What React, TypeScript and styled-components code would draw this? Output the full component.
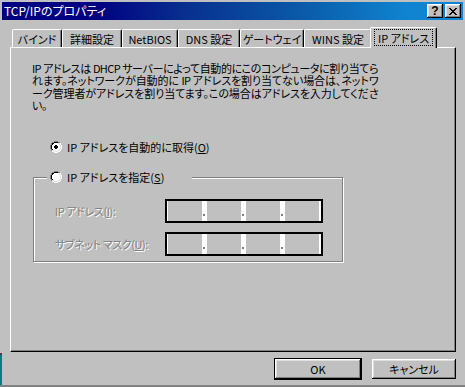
import React from "react";
import styled, { createGlobalStyle } from "styled-components";

const FONT = `"Noto Sans CJK JP", "Noto Sans", sans-serif`;

const GlobalStyle = createGlobalStyle`
  html, body { margin: 0; padding: 0; background: #c0c0c0; }
  body {
    font-family: ${FONT};
    font-size: 11px;
    color: #000;
    font-feature-settings: "palt";
  }
`;

const Screen = styled.div`
  width: 465px;
  height: 387px;
  display: flex;
  flex-direction: column;
  background: #c0c0c0;
  overflow: hidden;
`;

const Main = styled.div`
  display: flex;
  flex: 1;
  min-height: 0;
`;

const BottomEdge = styled.div`
  height: 2px;
  background: #808080;
`;

const LeftStrip = styled.div`
  width: 2px;
  display: flex;
  flex-direction: column;
`;
const StripGrey = styled.div`
  flex: 1;
  background: #c0c0c0;
`;
const StripLine = styled.div`
  height: 2px;
  background: #404040;
`;
const StripDesk = styled.div`
  height: 30px;
  background: #008080;
`;

const Window = styled.div`
  flex: 1;
  display: flex;
  flex-direction: column;
  padding: 2px 2px 0 0;
  min-width: 0;
`;

const TitleBar = styled.div`
  height: 18px;
  display: flex;
  align-items: center;
  padding: 0 2px 0 2px;
  background: linear-gradient(90deg, #000080 0%, #000080 20%, #08308f 40%, #0a5aa8 65%, #1084d0 88%, #1084d0 100%);
  color: #fff;
`;

const TitleText = styled.span`
  flex: 1;
  font-size: 12px;
  line-height: 18px;
  white-space: nowrap;
`;

const CaptionButtons = styled.div`
  display: flex;
  gap: 2px;
`;

const CaptionButton = styled.div`
  width: 16px;
  height: 14px;
  background: #c0c0c0;
  box-shadow: inset -1px -1px #000, inset 1px 1px #fff, inset -2px -2px #808080, inset 2px 2px #dfdfdf;
  display: flex;
  align-items: center;
  justify-content: center;
  color: #000;
  font-family: "Liberation Sans", Arial, sans-serif;
  font-weight: bold;
  font-size: 12px;
  line-height: 14px;
`;

const TabsArea = styled.div`
  margin: 7px 7px 0 8px;
  display: flex;
  flex-direction: column;
`;

const TabRow = styled.div`
  display: flex;
  align-items: flex-end;
  height: 20px;
  padding-left: 2px;
  position: relative;
  z-index: 1;
`;

const Tab = styled.div<{ $w: number; $active?: boolean }>`
  box-sizing: border-box;
  width: ${(p) => p.$w}px;
  height: ${(p) => (p.$active ? 21 : 18)}px;
  margin-left: ${(p) => (p.$active ? -2 : 0)}px;
  margin-bottom: ${(p) => (p.$active ? -1 : 0)}px;
  padding: ${(p) => (p.$active ? "1px 3px 2px 3px" : "0")};
  background: #c0c0c0;
  border-top: 1px solid #fff;
  border-left: 1px solid #fff;
  border-right: 1px solid #000;
  border-top-left-radius: 2px;
  border-top-right-radius: 2px;
  box-shadow: inset -1px 0 0 #808080;
  display: flex;
  align-items: stretch;
  justify-content: center;
  white-space: nowrap;
`;

const TabLabel = styled.span<{ $focus?: boolean }>`
  flex: 1;
  display: flex;
  align-items: center;
  justify-content: center;
  border: 1px dotted ${(p) => (p.$focus ? "#000" : "transparent")};
  line-height: 14px;
`;

const Panel = styled.div`
  box-sizing: border-box;
  height: 305px;
  border-top: 1px solid #fff;
  border-left: 1px solid #fff;
  border-right: 1px solid #000;
  border-bottom: 1px solid #000;
  box-shadow: inset -1px -1px 0 #808080;
  padding: 14px 20px 0 21px;
  display: flex;
  flex-direction: column;
`;

const Description = styled.div`
  display: flex;
  flex-direction: column;
`;

const DescLine = styled.span<{ $last?: boolean }>`
  display: block;
  width: 346px;
  line-height: 12.4px;
  white-space: nowrap;
  letter-spacing: -0.6px;
  text-align: ${(p) => (p.$last ? "left" : "justify")};
  text-align-last: ${(p) => (p.$last ? "left" : "justify")};
`;

const RadioRow = styled.div<{ $top?: number }>`
  display: flex;
  align-items: center;
  gap: 5px;
  height: 14px;
  white-space: nowrap;
  margin-top: ${(p) => p.$top ?? 0}px;
  margin-left: ${(p) => (p.$top !== undefined ? 18 : 0)}px;
`;

const Group = styled.div`
  position: relative;
  box-sizing: border-box;
  margin: 23px 0 0 1px;
  width: 310px;
  height: 85px;
  border: 1px solid #808080;
  box-shadow: inset 1px 1px 0 #fff, 1px 1px 0 #fff;
  padding: 21px 0 0 21px;
  display: flex;
  flex-direction: column;
  gap: 9px;
`;

const Legend = styled.div`
  position: absolute;
  top: -8px;
  left: 13px;
  box-sizing: border-box;
  width: 145px;
  padding: 0 3px;
  background: #c0c0c0;
`;

const FieldRow = styled.div`
  display: flex;
  align-items: center;
  height: 24px;
`;

const DisabledLabel = styled.span`
  width: 110px;
  color: #808080;
  text-shadow: 1px 1px 0 #fff;
  white-space: nowrap;
  letter-spacing: -0.4px;
`;

const IpBox = styled.div`
  box-sizing: border-box;
  width: 158px;
  height: 24px;
  border: 2px solid #000;
  background: #fff;
  padding-left: 1px;
  display: flex;
`;

const Octet = styled.div`
  width: 34px;
  background: #c0c0c0;
`;

const DotGap = styled.div`
  width: 5px;
  display: flex;
  align-items: flex-end;
  padding: 0 0 5px 1px;
  box-sizing: border-box;
`;

const Dot = styled.div`
  width: 2px;
  height: 2px;
  background: #808080;
`;

const Footer = styled.div`
  display: flex;
  justify-content: flex-end;
  align-items: flex-start;
  gap: 10px;
  margin-top: 6px;
  padding-right: 7px;
`;

const Button = styled.div<{ $default?: boolean; $w: number }>`
  box-sizing: border-box;
  width: ${(p) => p.$w}px;
  height: ${(p) => (p.$default ? 22 : 20)}px;
  margin-top: ${(p) => (p.$default ? 0 : 1)}px;
  background: #c0c0c0;
  border: ${(p) => (p.$default ? "1px solid #000" : "none")};
  box-shadow: inset -1px -1px #000, inset 1px 1px #fff, inset -2px -2px #808080, inset 2px 2px #dfdfdf;
  display: flex;
  align-items: center;
  justify-content: center;
  white-space: nowrap;
`;

const Underline = styled.span`
  text-decoration: underline;
`;

const RADIO_MAP = [
  "....dddd....",
  "..ddkkkkdd..",
  ".dkkwwwwllh.",
  ".dkwwwwwwlh.",
  "dkwwwwwwwwlh",
  "dkwwwwwwwwlh",
  "dkwwwwwwwwlh",
  "dkwwwwwwwwlh",
  ".dkwwwwwwlh.",
  ".dllwwwwllh.",
  "..hhllllhh..",
  "....hhhh....",
];
const DOT_MAP = ["....", "....", "....", "....", ".....xx", "....xxxx", "....xxxx", ".....xx"];
const COLORS: Record<string, string> = { d: "#808080", k: "#000", w: "#fff", l: "#dfdfdf", h: "#fff", x: "#000" };

function Radio({ checked }: { checked?: boolean }) {
  const rects: React.ReactNode[] = [];
  const draw = (map: string[], key: string) =>
    map.forEach((row, y) =>
      row.split("").forEach((c, x) => {
        if (COLORS[c]) rects.push(<rect key={`${key}${x}-${y}`} x={x} y={y} width={1} height={1} fill={COLORS[c]} />);
      })
    );
  draw(RADIO_MAP, "r");
  if (checked) draw(DOT_MAP, "d");
  return (
    <svg width="12" height="12" viewBox="0 0 12 12" shapeRendering="crispEdges">
      {rects}
    </svg>
  );
}

function CloseGlyph() {
  const rows = ["xx....xx", ".xx..xx.", "..xxxx..", "...xx...", "..xxxx..", ".xx..xx.", "xx....xx"];
  return (
    <svg width="8" height="7" viewBox="0 0 8 7" shapeRendering="crispEdges">
      {rows.flatMap((r, y) =>
        r.split("").map((c, x) => (c === "x" ? <rect key={`${x}-${y}`} x={x} y={y} width={1} height={1} fill="#000" /> : null))
      )}
    </svg>
  );
}

function IpAddressBox() {
  return (
    <IpBox>
      <Octet />
      <DotGap><Dot /></DotGap>
      <Octet />
      <DotGap><Dot /></DotGap>
      <Octet />
      <DotGap><Dot /></DotGap>
      <Octet />
    </IpBox>
  );
}

const TABS: { label: string; w: number }[] = [
  { label: "バインド", w: 50 },
  { label: "詳細設定", w: 60 },
  { label: "NetBIOS", w: 56 },
  { label: "DNS 設定", w: 62 },
  { label: "ゲートウェイ", w: 64 },
  { label: "WINS 設定", w: 68 },
];

const DESCRIPTION = [
  "IP アドレスは DHCP サーバーによって自動的にこのコンピュータに割り当てら",
  "れます。ネットワークが自動的に IP アドレスを割り当てない場合は、ネットワ",
  "ーク管理者がアドレスを割り当てます。この場合はアドレスを入力してくださ",
  "い。",
];

export default function App() {
  return (
    <>
      <GlobalStyle />
      <Screen>
        <Main>
          <LeftStrip>
            <StripGrey />
            <StripLine />
            <StripDesk />
          </LeftStrip>
          <Window>
            <TitleBar>
              <TitleText>TCP/IPのプロパティ</TitleText>
              <CaptionButtons>
                <CaptionButton>?</CaptionButton>
                <CaptionButton>
                  <CloseGlyph />
                </CaptionButton>
              </CaptionButtons>
            </TitleBar>
            <TabsArea>
              <TabRow>
                {TABS.map((t) => (
                  <Tab key={t.label} $w={t.w}>
                    <TabLabel>{t.label}</TabLabel>
                  </Tab>
                ))}
                <Tab $w={67} $active>
                  <TabLabel $focus>IP アドレス</TabLabel>
                </Tab>
              </TabRow>
              <Panel>
                <Description>
                  {DESCRIPTION.map((line, i) => (
                    <DescLine key={i} $last={i === DESCRIPTION.length - 1}>
                      {line}
                    </DescLine>
                  ))}
                </Description>
                <RadioRow $top={28}>
                  <Radio checked />
                  <span>
                    IP アドレスを自動的に取得(<Underline>O</Underline>)
                  </span>
                </RadioRow>
                <Group>
                  <Legend>
                    <RadioRow>
                      <Radio />
                      <span>
                        IP アドレスを指定(<Underline>S</Underline>)
                      </span>
                    </RadioRow>
                  </Legend>
                  <FieldRow>
                    <DisabledLabel>
                      IP アドレス(<Underline>I</Underline>):
                    </DisabledLabel>
                    <IpAddressBox />
                  </FieldRow>
                  <FieldRow>
                    <DisabledLabel>
                      サブネット マスク(<Underline>U</Underline>):
                    </DisabledLabel>
                    <IpAddressBox />
                  </FieldRow>
                </Group>
              </Panel>
            </TabsArea>
            <Footer>
              <Button $w={88} $default>
                OK
              </Button>
              <Button $w={84}>キャンセル</Button>
            </Footer>
          </Window>
        </Main>
        <BottomEdge />
      </Screen>
    </>
  );
}
